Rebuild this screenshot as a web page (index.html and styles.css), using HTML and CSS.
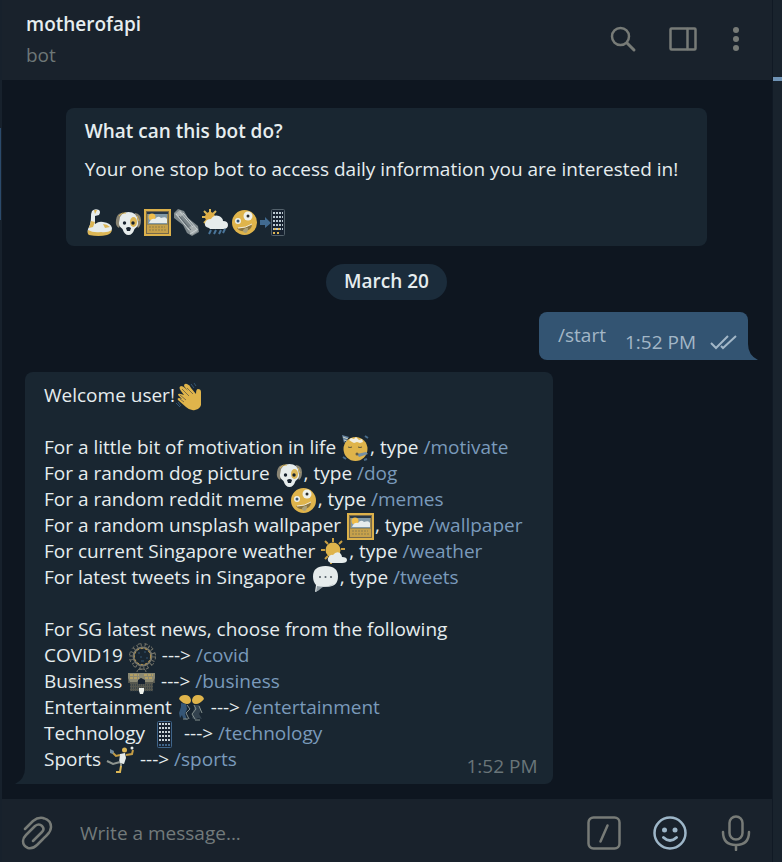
FILE: index.html
```html
<!DOCTYPE html>
<html lang="en">
<head>
<meta charset="utf-8">
<meta name="viewport" content="width=device-width, initial-scale=1">
<title>motherofapi</title>
<link rel="stylesheet" href="styles.css">
</head>
<body>
<svg class="sprite" aria-hidden="true">
  <symbol id="arm" viewBox="0 0 29 29">
    <path d="M7 3q3-3 7-1q2 2 0 5l-4 1l0 8q4-3 8-2q8 1 9 6q0 5-5 6q-10 2-18 0q-2-1-1-5q3-5 3-12q0-4 1-6z" fill="#e6ecec"/>
    <path d="M3 22q-1 4 1 5q10 2 18 0q4-1 5-5q-5 3-11 2q-8 1-13-2zM6 13l-2 7 4-1 2-5zM9 2l3 0-2 4zM18 16q4 0 7 3l-5 1z" fill="#dcb655"/>
  </symbol>
  <symbol id="dog" viewBox="0 0 29 29">
    <path d="M8 5Q3 5 2 12q-1 6 3 8l4-10zM21 5q6 1 6 7t-3 8l-5-10z" fill="#8a8574"/>
    <path d="M14.500 4q8 0 9 8q2 6-3 9q-2 6-6 6t-6-6q-5-3-3-9q1-8 9-8z" fill="#e6ecec"/>
    <ellipse cx="19.500" cy="14" rx="3.500" ry="5" fill="#dcb655"/>
    <circle cx="10.500" cy="15" r="1.700" fill="#17222e"/><circle cx="19" cy="15" r="1.700" fill="#17222e"/>
    <path d="M12 20q2.500-2 5 0l-1 3h-3z" fill="#17222e"/>
    <path d="M5 8q3-4 7-3M23 8l2 5" stroke="#dcb655" fill="none"/>
  </symbol>
  <symbol id="frame" viewBox="0 0 29 29">
    <rect x="1" y="1" width="27" height="27" fill="#dcb14b"/>
    <rect x="3.500" y="3.500" width="22" height="22" fill="#9a8852" stroke="#77694a"/>
    <path d="M4 4h21v2H4z" fill="#273746"/><path d="M5 6h19v10H5z" fill="#8198a6"/>
    <circle cx="9" cy="9" r="3.500" fill="#efbd4b"/>
    <path d="M7 13q2-3 5-2q3-4 6-1q5-2 6 1v4H6z" fill="#e6ecec"/>
    <path d="M4 17h21v8H4z" fill="#c6a14b"/>
    <path d="M6 19h16M6 22h18" stroke="#8d7c4c" stroke-dasharray="2 1"/>
  </symbol>
  <symbol id="news" viewBox="0 0 29 29">
    <path d="M2 5L6 1l6 2 4 7 10 8 1 6-7 4-5-3-4-8-9-7z" fill="#7d878b"/>
    <path d="M3 6l5-4 4 4-5 4zM15 20l7-3 4 6-6 4z" fill="#a8afb0"/>
    <path d="M4 6l13 16M8 4l13 15M11 5l14 16M18 26l8-5" fill="none" stroke="#c7ced0"/>
    <path d="M7 8l12 14" stroke="#5c666d" fill="none"/>
  </symbol>
  <symbol id="rain" viewBox="0 0 29 29">
    <path d="M9 1v4M3 3l3 3M1 9h4M15 3l-3 3M3 15l3-3" stroke="#dcb655" stroke-width="2"/>
    <circle cx="9" cy="9" r="5" fill="#dfae45"/>
    <path d="M8 20q-5-1-4-5q1-4 6-4q3-5 8-3q4 2 4 5q5 0 5 4t-5 4H9z" fill="#e6ecec"/>
    <path d="M10 22l-2 4M15 22l-2 4M20 22l-2 4M24 21l-2 4" stroke="#4a759a" stroke-width="2"/>
  </symbol>
  <symbol id="zany" viewBox="0 0 29 29">
    <circle cx="14.500" cy="14.500" r="12.500" fill="#dfb44b"/>
    <circle cx="18" cy="8" r="4.500" fill="#eef1ec"/><circle cx="8" cy="13" r="3" fill="#eef1ec"/>
    <circle cx="18" cy="8" r="1.500" fill="#292c2c"/><circle cx="8" cy="13" r="1.500" fill="#355572"/>
    <path d="M7 20q8 1 15-4q0 6-7 7q-5 1-8-3z" fill="#8a743f"/><path d="M8 20q8 0 14-4" stroke="#efe9d7" fill="none"/>
    <path d="M13 22q3-3 5-2q0 4-2 5-3 0-3-3z" fill="#aaa078"/>
  </symbol>
  <symbol id="mobile" viewBox="0 0 29 29">
    <rect x="7.500" y="1.500" width="14" height="26" rx="1" fill="#172230" stroke="#3f658a"/>
    <path d="M9 4h11M9 8h11M9 12h11M9 16h11M9 20h11" stroke="#c9d3d8" stroke-width="2" stroke-dasharray="2 1"/>
    <path d="M9 25h11" stroke="#3f658a" stroke-width="2" stroke-dasharray="2 1"/>
  </symbol>
  <symbol id="calling" viewBox="0 0 29 29">
    <rect x="12.500" y="1.500" width="13" height="26" rx="1" fill="#172230" stroke="#53616b"/>
    <path d="M14 5h10M14 9h10M14 13h10M14 17h10M14 21h10" stroke="#b9c7cf" stroke-width="2" stroke-dasharray="2 1"/>
    <path d="M15 21h6M14 25h7" stroke="#dcb655" stroke-width="2" stroke-dasharray="2 2"/>
    <path d="M1 12h5v-3l6 6-6 5v-3H1z" fill="#416a90"/>
  </symbol>
  <symbol id="wave" viewBox="0 0 29 29">
    <path d="M6 9q-3-4 0-5q2 0 4 2l3 3L9 4q0-3 3-2t4 4l5 6q0-5 2-5q3 0 3 3l0 9q1 8-6 9q-5 1-9-3L3 18q-1-2 1-2l3 1-4-4q0-2 3-1l3 1z" fill="#dfb44b"/>
    <path d="M7 7l7 7M12 6l6 6M5 13l6 5M5 17l4 3" fill="none" stroke="#806e45"/>
    <path d="M16 2l3 4M19 1l2 3M1 21l4 4M3 20l3 4" stroke="#355572"/>
  </symbol>
  <symbol id="party" viewBox="0 0 29 29">
    <circle cx="14.500" cy="15" r="12" fill="#dfb44b"/>
    <path d="M1 1l7 2-5 6z" fill="#6683a0"/><path d="M2 3l5 2M3 6l3 1" stroke="#c8cfc4"/>
    <path d="M8 6l2-2 3 1 2-2 3 3 3-1 1 3-3 1-3-1-3 1-2-1z" fill="#f0ede0"/>
    <path d="M7 13q2 1 4 0M17 13q2 1 4 0" stroke="#5c563d" fill="none"/>
    <path d="M16 20l9-2 2 2-9 3" fill="#7590a4"/><circle cx="16" cy="20" r="1.500" fill="#625d47"/>
    <path d="M24 2l3 2M2 23l3 2M23 26l3-1" stroke="#496b89" stroke-width="2"/>
  </symbol>
  <symbol id="sun" viewBox="0 0 29 29">
    <path d="M13 0v4M5 3l3 3M1 12h4M5 21l3-3M22 3l-3 3M25 11h-4M11 22v4" stroke="#c99f42" stroke-width="2"/>
    <circle cx="13" cy="12" r="7.500" fill="#dfb44b"/>
    <path d="M11 25q-4-1-3-5q2-4 5-3q3-4 7-2q2 2 2 4q5 0 5 3t-5 3H12z" fill="#e6ecec"/>
  </symbol>
  <symbol id="speech" viewBox="0 0 29 29">
    <path d="M14.500 2Q27 2 27 12.500T15 23h-5q-2 4-6 5l1-7Q2 18 2 12.500Q2 2 14.500 2z" fill="#e6ecec"/>
    <path d="M6 22q10 2 17-2q-4 3-11 3l-7 5z" fill="#8f9ba2"/>
    <g fill="#525d65"><circle cx="9" cy="13" r="1"/><circle cx="14.500" cy="13" r="1"/><circle cx="20" cy="13" r="1"/></g>
  </symbol>
  <symbol id="virus" viewBox="0 0 29 29">
    <g fill="none" stroke="#77766b">
      <circle cx="14.500" cy="14.500" r="9" stroke-width="2"/>
      <circle cx="14.500" cy="14.500" r="11.500" stroke-width="3" stroke-dasharray="1 3"/>
      <circle cx="14.500" cy="14.500" r="13" stroke-dasharray="3 4"/>
    </g>
    <circle cx="14.500" cy="14.500" r="8" fill="none" stroke="#c69e45" stroke-dasharray="2 2"/>
    <path d="M10 11h2M16 10h2M12 15h2M18 16h2M13 19h3" stroke="#355572"/>
  </symbol>
  <symbol id="case" viewBox="0 0 29 29">
    <path d="M10 4q0-3 4.500-3t4.500 3" fill="none" stroke="#77766b"/>
    <path d="M1 5h27v10h-2v8H3v-8H1z" fill="#55574f"/>
    <path d="M1 5h27v5l-2 4h-8l-4-4-4 4H3l-2-4z" fill="#8a8873"/>
    <path d="M3 7h9M3 10h9M17 7h9M18 10h8" stroke="#dcb655" stroke-dasharray="3 1"/>
    <path d="M11 12l3-2 4 2v4h-7z" fill="#172230"/>
    <path d="M3 17h23M3 20h23M3 23h23" stroke="#273540" stroke-dasharray="1 1"/>
    <path d="M12 20h5v3l-1 3h-3l-1-3z" fill="#eef1ec"/>
  </symbol>
  <symbol id="dancers" viewBox="0 0 29 29">
    <path d="M2 5q1-4 6-4t6 5q0 4-4 4t-8-5zM27 5q-1-4-6-4t-6 5q0 4 4 4t8-5z" fill="#dfb44b"/>
    <path d="M4 9l5 1 1 5-2 5 2 6-4-2-1-3-2 3-1-5 2-6z" fill="#355676"/>
    <path d="M18 11l4 0 2 5-2 4 3 5-4-1-3 2-3-2 1-6z" fill="#33424e"/>
    <path d="M10 11l3 4-4 4 3 6M17 11l2 4-4 5 3 5M22 12l3 7M6 25h5M18 26h5" fill="none" stroke="#85918f"/>
  </symbol>
  <symbol id="sport" viewBox="0 0 29 29">
    <circle cx="18.500" cy="4" r="2.500" fill="#dcb655"/><circle cx="26" cy="2" r="1.500" fill="#e6ecec"/>
    <path d="M14 8l5-1 1 5-2 6-5-1z" fill="#e6ecec"/>
    <path d="M20 9l6-1 1-4M14 9l-4 1-4-4" fill="none" stroke="#c49d45" stroke-width="2"/>
    <path d="M4 3l4 2-1 3-3-1z" fill="#718ba0"/>
    <path d="M14 16l-7 2-6-3M15 17l0 4" fill="none" stroke="#8e9590" stroke-width="2"/>
    <path d="M15 20l-1 6h-4" fill="none" stroke="#dcb655" stroke-width="2"/>
  </symbol>
</svg>
<div class="app">
  <div class="rail"><div class="rail-mark"></div></div>
  <div class="main">
    <header class="header">
      <div class="peer">
        <h1 class="name">motherofapi</h1>
        <p class="status">bot</p>
      </div>
      <div class="actions">
        <button class="icon-button" type="button" aria-label="Search"><svg width="36" height="36" viewBox="0 0 36 36"><circle cx="15.500" cy="14.500" r="8.500"/><path d="M22 21l7 7" stroke-width="3"/></svg></button>
        <button class="icon-button" type="button" aria-label="Side panel"><svg width="36" height="36" viewBox="0 0 36 36"><rect x="5.500" y="6.500" width="25" height="21" rx="1"/><path d="M22.500 7v20"/></svg></button>
        <button class="icon-button narrow" type="button" aria-label="More"><svg width="22" height="36" viewBox="0 0 22 36" class="dots"><circle cx="11" cy="8" r="3"/><circle cx="11" cy="17" r="3"/><circle cx="11" cy="26" r="3"/></svg></button>
      </div>
    </header>
    <main class="chat">
      <section class="about">
        <h2 class="about-title">What can this bot do?</h2>
        <p>Your one stop bot to access daily information you are interested in!</p>
        <p class="emoji-row"><svg class="emoji"><use href="#arm"/></svg><svg class="emoji"><use href="#dog"/></svg><svg class="emoji"><use href="#frame"/></svg><svg class="emoji"><use href="#news"/></svg><svg class="emoji"><use href="#rain"/></svg><svg class="emoji"><use href="#zany"/></svg><svg class="emoji"><use href="#calling"/></svg></p>
      </section>
      <div class="date">March 20</div>
      <article class="bubble sent">
        <a class="sent-text" href="#">/start</a>
        <span class="sent-meta"><time>1:52 PM</time>
          <svg class="ticks" width="28" height="16" viewBox="0 0 28 16"><path d="M1 9l5 5L18 2M11 12l2 2L26 2"/></svg></span>
        <svg class="tail" width="10" height="16" viewBox="0 0 10 16"><path d="M0 0q0 11 10 16H0z"/></svg>
      </article>
      <article class="bubble received">
        <p>Welcome user!<svg class="emoji"><use href="#wave"/></svg></p>
        <p class="block">For a little bit of motivation in life <svg class="emoji"><use href="#party"/></svg>, type <a href="#">/motivate</a><br>
        For a random dog picture <svg class="emoji"><use href="#dog"/></svg>, type <a href="#">/dog</a><br>
        For a random reddit meme <svg class="emoji"><use href="#zany"/></svg>, type <a href="#">/memes</a><br>
        For a random unsplash wallpaper <svg class="emoji"><use href="#frame"/></svg>, type <a href="#">/wallpaper</a><br>
        For current Singapore weather <svg class="emoji"><use href="#sun"/></svg>, type <a href="#">/weather</a><br>
        For latest tweets in Singapore <svg class="emoji"><use href="#speech"/></svg>, type <a href="#">/tweets</a></p>
        <p class="block">For SG latest news, choose from the following<br>
        COVID19 <svg class="emoji"><use href="#virus"/></svg> ---&gt; <a href="#">/covid</a><br>
        Business <svg class="emoji"><use href="#case"/></svg> ---&gt; <a href="#">/business</a><br>
        Entertainment <svg class="emoji"><use href="#dancers"/></svg> ---&gt; <a href="#">/entertainment</a><br>
        Technology <svg class="emoji"><use href="#mobile"/></svg> ---&gt; <a href="#">/technology</a><br>
        Sports <svg class="emoji"><use href="#sport"/></svg> ---&gt; <a href="#">/sports</a></p>
        <time class="received-time">1:52 PM</time>
        <svg class="tail" width="10" height="16" viewBox="0 0 10 16"><path d="M10 0q0 11-10 16h10z"/></svg>
      </article>
    </main>
    <form class="composer">
      <button class="icon-button" type="button" aria-label="Attach file"><svg width="34" height="34" viewBox="0 0 34 34"><path d="M5 13l8-8q5-4 10-3q8 2 8 9q0 4-4 8L17 29q-4 4-9 3q-5-2-5-7q0-3 3-6l9-9q4-3 7 0q3 3 0 6l-9 9"/></svg></button>
      <input class="message" type="text" aria-label="Message" placeholder="Write a message...">
      <button class="icon-button" type="button" aria-label="Bot commands"><svg width="34" height="34" viewBox="0 0 34 34"><rect x="1.500" y="1.500" width="31" height="31" rx="5"/><path d="M20.500 9.500l-7 16"/></svg></button>
      <button class="icon-button emoji-button" type="button" aria-label="Emoji"><svg width="34" height="34" viewBox="0 0 34 34"><circle cx="17" cy="17" r="15.500"/><path d="M10.500 21.500q6.500 6 13 0" stroke-width="3"/><g class="eyes"><circle cx="11.500" cy="14" r="2.500"/><circle cx="22" cy="14" r="2.500"/></g></svg></button>
      <button class="icon-button" type="button" aria-label="Record voice message"><svg width="34" height="36" viewBox="0 0 34 36"><rect x="10.500" y="1.500" width="13" height="23" rx="6.500"/><path d="M4 17q0 13 13 13t13-13M17 30v5"/></svg></button>
    </form>
  </div>
  <aside class="edge"><div class="edge-mark"></div></aside>
</div>
</body>
</html>
```
FILE: styles.css
```css
* {
  box-sizing: border-box;
}

body {
  margin: 0;
  background: #0e1620;
  color: #e6edef;
  font: 19px/26px "Open Sans", "Noto Sans", sans-serif;
}

h1,
h2,
p {
  margin: 0;
  font-size: inherit;
  font-weight: inherit;
}

a {
  color: #7a9abb;
  text-decoration: none;
}

.sprite {
  display: none;
}

.app {
  display: flex;
  min-height: 100vh;
}

.rail {
  flex: none;
  width: 2px;
  background: #17212c;
}

.rail-mark {
  width: 1px;
  height: 92px;
  margin-top: 128px;
  background: #2b4a6b;
}

.main {
  display: flex;
  flex: 1;
  flex-direction: column;
  min-width: 0;
}

.edge {
  flex: none;
  width: 10px;
  background: #19232d;
  border-left: 1px solid #101924;
}

.edge-mark {
  height: 4px;
  margin-top: 77px;
  background: #6f93b5;
}

.header {
  display: flex;
  justify-content: space-between;
  padding: 11px 25px 12px 24px;
  background: #19222c;
}

.name {
  font-weight: 600;
}

.status {
  margin-top: 5px;
  color: #6d7777;
}

.actions {
  display: flex;
  align-items: center;
  gap: 24px;
}

.icon-button {
  flex: none;
  width: 34px;
  padding: 0;
  border: 0;
  background: none;
  color: #777b77;
}

.actions .icon-button {
  width: 36px;
}

.actions .narrow {
  width: 22px;
}

.icon-button svg {
  display: block;
  fill: none;
  stroke: currentColor;
  stroke-width: 2.5;
  stroke-linecap: round;
  stroke-linejoin: round;
}

.icon-button .dots,
.icon-button .eyes {
  fill: currentColor;
  stroke: none;
}

.emoji-button {
  color: #9db6c8;
}

.chat {
  display: flex;
  flex: 1;
  flex-direction: column;
  align-items: center;
  gap: 12px;
  padding: 28px 24px 15px 23px;
}

.about {
  padding: 10px 29px 12px 19px;
  border-radius: 8px;
  background: #192631;
}

.about-title {
  margin-bottom: 12px;
  font-weight: 600;
}

.emoji-row {
  margin-top: 26px;
}

.emoji {
  width: 29px;
  height: 29px;
  margin: -6px 0;
  vertical-align: middle;
}

.date {
  margin-top: 6px;
  padding: 4px 18px 6px;
  border-radius: 18px;
  background: #1b2c3b;
  font-weight: 600;
}

.bubble {
  position: relative;
  border-radius: 8px;
}

.sent {
  display: flex;
  align-self: flex-end;
  gap: 19px;
  padding: 10px 10px 5px 19px;
  border-bottom-right-radius: 0;
  background: #335472;
  color: #a3b7c7;
}

.sent-text {
  color: inherit;
}

.sent-meta {
  display: flex;
  align-items: center;
  gap: 14px;
  padding-top: 7px;
}

.ticks {
  fill: none;
  stroke: #a3b7c7;
  stroke-width: 2;
}

.received {
  align-self: flex-start;
  padding: 10px 31px 12px 19px;
  border-bottom-left-radius: 0;
  background: #192631;
}

.block {
  margin-top: 26px;
}

.received-time {
  position: absolute;
  right: 16px;
  bottom: 5px;
  color: #697579;
}

.tail {
  position: absolute;
  bottom: 0;
}

.sent .tail {
  left: 100%;
  fill: #335472;
}

.received .tail {
  right: 100%;
  fill: #192631;
}

.composer {
  display: flex;
  align-items: center;
  gap: 32px;
  padding: 16px 19px 11px 18px;
  background: #19222c;
}

.message {
  flex: 1;
  min-width: 0;
  height: 34px;
  margin-left: -6px;
  padding: 0;
  border: 0;
  outline: 0;
  background: none;
  color: inherit;
  font: inherit;
}

.message::placeholder {
  color: #727a7b;
  opacity: 1;
}
```
